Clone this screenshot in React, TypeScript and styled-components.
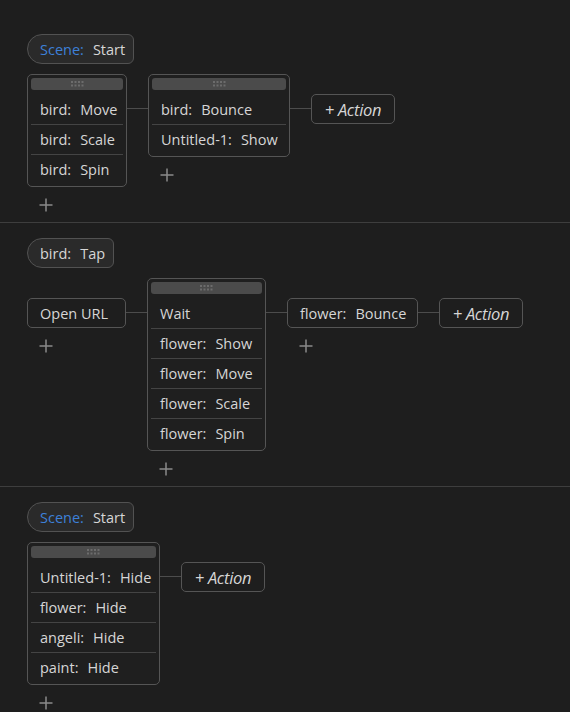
import React from "react"
import styled, { createGlobalStyle } from "styled-components"

type Label = { obj?: string; act: string }

type Step =
  | { kind: "card"; width: number; rows: Label[] }
  | { kind: "box"; width: number; label: Label }
  | { kind: "action"; width: number }

type Section = {
  trigger: Label & { scene?: boolean }
  steps: Step[]
}

const sections: Section[] = [
  {
    trigger: { obj: "Scene:", act: "Start", scene: true },
    steps: [
      {
        kind: "card",
        width: 100,
        rows: [
          { obj: "bird:", act: "Move" },
          { obj: "bird:", act: "Scale" },
          { obj: "bird:", act: "Spin" },
        ],
      },
      {
        kind: "card",
        width: 142,
        rows: [
          { obj: "bird:", act: "Bounce" },
          { obj: "Untitled-1:", act: "Show" },
        ],
      },
      { kind: "action", width: 84 },
    ],
  },
  {
    trigger: { obj: "bird:", act: "Tap" },
    steps: [
      { kind: "box", width: 99, label: { act: "Open URL" } },
      {
        kind: "card",
        width: 119,
        rows: [
          { act: "Wait" },
          { obj: "flower:", act: "Show" },
          { obj: "flower:", act: "Move" },
          { obj: "flower:", act: "Scale" },
          { obj: "flower:", act: "Spin" },
        ],
      },
      { kind: "box", width: 131, label: { obj: "flower:", act: "Bounce" } },
      { kind: "action", width: 84 },
    ],
  },
  {
    trigger: { obj: "Scene:", act: "Start", scene: true },
    steps: [
      {
        kind: "card",
        width: 133,
        rows: [
          { obj: "Untitled-1:", act: "Hide" },
          { obj: "flower:", act: "Hide" },
          { obj: "angeli:", act: "Hide" },
          { obj: "paint:", act: "Hide" },
        ],
      },
      { kind: "action", width: 84 },
    ],
  },
]

const GlobalStyle = createGlobalStyle`
  html, body {
    margin: 0;
    background: #1e1e1e;
  }
  body {
    font-family: "Open Sans", "Noto Sans", sans-serif;
    color: #d6d6d6;
  }
`

const PlusIcon = () => (
  <svg width="14" height="14" viewBox="0 0 14 14">
    <path d="M7 0.5V13.5M0.5 7H13.5" stroke="#8a8a8a" strokeWidth="1.5" fill="none" />
  </svg>
)

const Grip = () => (
  <svg width="13" height="6" viewBox="0 0 13 6">
    {[0, 1, 2, 3].map((c) =>
      [0, 1].map((r) => (
        <rect key={`${c}-${r}`} x={c * 3.5} y={r * 3.5} width="2" height="2" fill="#6c6c6c" />
      ))
    )}
  </svg>
)

const LabelText = ({ label, scene }: { label: Label; scene?: boolean }) => (
  <>
    {label.obj && <Obj $scene={scene}>{label.obj}</Obj>}
    <span>{label.act}</span>
  </>
)

const App = () => (
  <Page>
    <GlobalStyle />
    {sections.map((section, i) => (
      <SectionWrap key={i} $first={i === 0}>
        <Trigger>
          <LabelText label={section.trigger} scene={section.trigger.scene} />
        </Trigger>
        <Chain>
          {section.steps.map((step, j) => (
            <React.Fragment key={j}>
              {j > 0 && <Connector />}
              <StepColumn>
                {step.kind === "card" && (
                  <Card $width={step.width}>
                    <Handle>
                      <Grip />
                    </Handle>
                    {step.rows.map((row, k) => (
                      <Row key={k}>
                        <LabelText label={row} />
                      </Row>
                    ))}
                  </Card>
                )}
                {step.kind === "box" && (
                  <Box $width={step.width}>
                    <LabelText label={step.label} />
                  </Box>
                )}
                {step.kind === "action" && <ActionButton $width={step.width}>+ Action</ActionButton>}
                {step.kind !== "action" && (
                  <AddButton>
                    <PlusIcon />
                  </AddButton>
                )}
              </StepColumn>
            </React.Fragment>
          ))}
        </Chain>
      </SectionWrap>
    ))}
  </Page>
)

export default App

const Page = styled.div`
  width: 570px;
  min-height: 712px;
  background: #1e1e1e;
`

const SectionWrap = styled.section<{ $first?: boolean }>`
  display: flex;
  flex-direction: column;
  gap: 10px;
  padding: ${(p) => (p.$first ? "34px" : "15px")} 0 10px 27px;
  border-top: ${(p) => (p.$first ? "none" : "1px solid #3e3e3e")};
`

const Trigger = styled.div`
  box-sizing: border-box;
  display: inline-flex;
  align-items: center;
  align-self: flex-start;
  height: 30px;
  padding: 0 8px 0 12px;
  border: 1px solid #525252;
  border-radius: 15px 6px 6px 15px;
  background: #2a2a2a;
  font-size: 14.5px;
`

const Obj = styled.span<{ $scene?: boolean }>`
  margin-right: 9px;
  color: ${(p) => (p.$scene ? "#3d80d8" : "inherit")};
`

const Chain = styled.div`
  display: flex;
  align-items: flex-start;
`

const StepColumn = styled.div`
  display: flex;
  flex-direction: column;
`

const Connector = styled.div`
  width: 21px;
  height: 1px;
  margin-top: 34px;
  background: #4c4c4c;
`

const Card = styled.div<{ $width: number }>`
  box-sizing: border-box;
  width: ${(p) => p.$width}px;
  padding: 3px 3px 2px;
  border: 1px solid #555;
  border-radius: 5px;
  background: #1f1f1f;
`

const Handle = styled.div`
  display: flex;
  align-items: center;
  justify-content: center;
  height: 12px;
  margin-bottom: 4px;
  border-radius: 3px;
  background: #4b4b4b;
`

const Row = styled.div`
  display: flex;
  align-items: center;
  height: 30px;
  padding-left: 9px;
  font-size: 14.5px;
  white-space: nowrap;
  box-sizing: border-box;
  & + & {
    border-top: 1px solid #444;
  }
`

const Box = styled.div<{ $width: number }>`
  box-sizing: border-box;
  display: flex;
  align-items: center;
  width: ${(p) => p.$width}px;
  height: 30px;
  margin-top: 20px;
  padding-left: 12px;
  border: 1px solid #555;
  border-radius: 5px;
  font-size: 14.5px;
  white-space: nowrap;
`

const ActionButton = styled.div<{ $width: number }>`
  box-sizing: border-box;
  display: flex;
  align-items: center;
  justify-content: center;
  width: ${(p) => p.$width}px;
  height: 30px;
  margin-top: 20px;
  border: 1px solid #555;
  border-radius: 5px;
  font-size: 16.5px;
  font-style: italic;
  letter-spacing: -0.3px;
  white-space: nowrap;
`

const AddButton = styled.div`
  display: flex;
  width: 14px;
  height: 14px;
  margin: 11px 0 0 12px;
`
